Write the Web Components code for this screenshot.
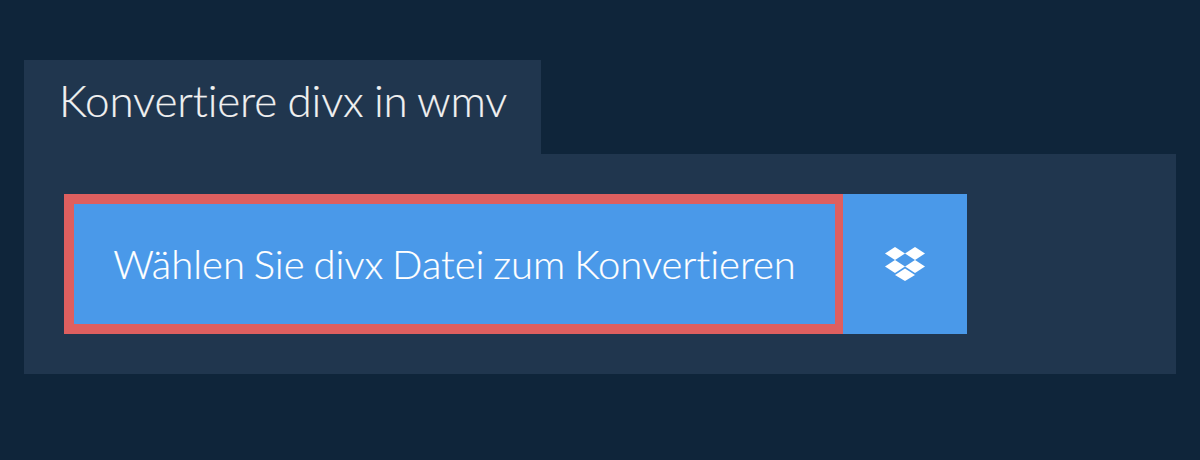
<!DOCTYPE html>
<html lang="de">
<head>
<meta charset="utf-8">
<title>Konvertiere divx in wmv</title>
<style>
  html, body { margin: 0; height: 100%; }
  body { background: #0f253a; font-family: "Lato", "Liberation Sans", sans-serif; font-weight: 300; overflow: hidden; font-variant-ligatures: none; }
</style>
</head>
<body>
<convert-panel heading="Konvertiere divx in wmv">
  <file-picker label="Wählen Sie divx Datei zum Konvertieren"></file-picker>
</convert-panel>

<script>
var panelTemplate = document.createElement('template')
panelTemplate.innerHTML = `
  <style>
    :host { display: block; padding: 60px 24px 0; color: #f1f1f1; }
    h1 {
      display: table;
      margin: 0;
      height: 94px;
      padding: 0 34px 0 35px;
      box-sizing: border-box;
      background: #20364e;
      font-size: 44px;
      font-weight: 300;
      letter-spacing: -0.14px;
      word-spacing: -1.5px;
      line-height: 80px;
      white-space: nowrap;
      -webkit-text-stroke: 0.2px currentColor;
    }
    .body { background: #20364e; padding: 40px; height: 220px; box-sizing: border-box; }
  </style>
  <h1></h1>
  <div class="body"><slot></slot></div>
`

class ConvertPanel extends HTMLElement {
  constructor () {
    super()
    this.attachShadow({ mode: 'open' }).appendChild(panelTemplate.content.cloneNode(true))
    this.shadowRoot.querySelector('h1').textContent = this.getAttribute('heading')
  }
}
customElements.define('convert-panel', ConvertPanel)

var pickerTemplate = document.createElement('template')
pickerTemplate.innerHTML = `
  <style>
    :host { display: flex; height: 140px; width: 903px; color: #fff; }
    button {
      font: inherit;
      color: inherit;
      background: #4a99e9;
      margin: 0;
      padding: 0;
      cursor: pointer;
    }
    .main {
      width: 779px;
      font-size: 40px;
      word-spacing: -2px;
      border: solid #de5f5f;
      border-width: 10px 8px 10px 10px;
      box-sizing: border-box;
      white-space: nowrap;
      -webkit-text-stroke: 0.2px currentColor;
    }
    .dropbox {
      width: 124px;
      border: 0;
      display: flex;
      align-items: center;
      justify-content: center;
    }
    svg { display: block; width: 40px; height: 34px; fill: #fff; }
  </style>
  <button class="main"></button>
  <button class="dropbox" aria-label="Dropbox">
    <svg viewBox="0 0 40 34">
      <path d="M10 0 20 6.5 10 13 0 6.5z"/>
      <path d="M30 0 40 6.5 30 13 20 6.5z"/>
      <path d="M10 13 20 19.5 10 26 0 19.5z"/>
      <path d="M30 13 40 19.5 30 26 20 19.5z"/>
      <path d="M20 21.5 30 28 20 34 10 28z"/>
    </svg>
  </button>
`

class FilePicker extends HTMLElement {
  constructor () {
    super()
    this.attachShadow({ mode: 'open' }).appendChild(pickerTemplate.content.cloneNode(true))
    this.shadowRoot.querySelector('.main').textContent = this.getAttribute('label')
  }
}
customElements.define('file-picker', FilePicker)
</script>
</body>
</html>
